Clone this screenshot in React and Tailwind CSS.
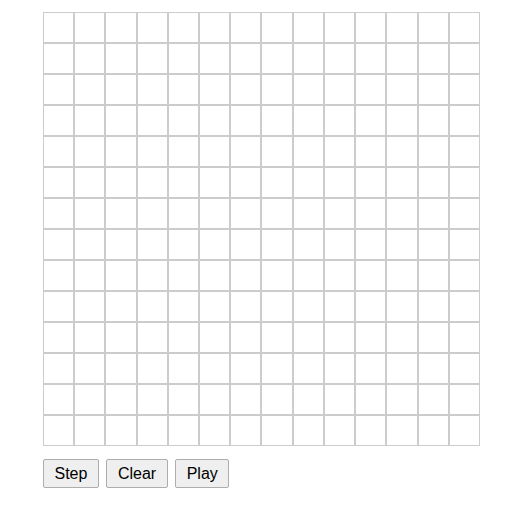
import React from "react";

export default function App() {
  const cells = Array.from({ length: 14 * 14 }, (_, i) => i);
  return (
    <div className="bg-white w-[524px] h-[515px] pl-[43px] pt-[12px]" style={{ fontFamily: '"Liberation Sans", Arial, sans-serif' }}>
      <div className="grid grid-cols-[repeat(14,1fr)] w-[437px]">
        {cells.map((i) => (
          <div key={i} className="h-[31px] border border-[#cccccc] bg-white" />
        ))}
      </div>
      <div className="flex gap-[7px] mt-[13px]">
        <button className="h-[29px] px-[10.5px] text-[16px] text-black bg-[#efefef] border border-[#adadad] rounded-[2px] leading-none">Step</button>
        <button className="h-[29px] px-[11px] text-[16px] text-black bg-[#efefef] border border-[#adadad] rounded-[2px] leading-none">Clear</button>
        <button className="h-[29px] px-[10.5px] text-[16px] text-black bg-[#efefef] border border-[#adadad] rounded-[2px] leading-none">Play</button>
      </div>
    </div>
  );
}
